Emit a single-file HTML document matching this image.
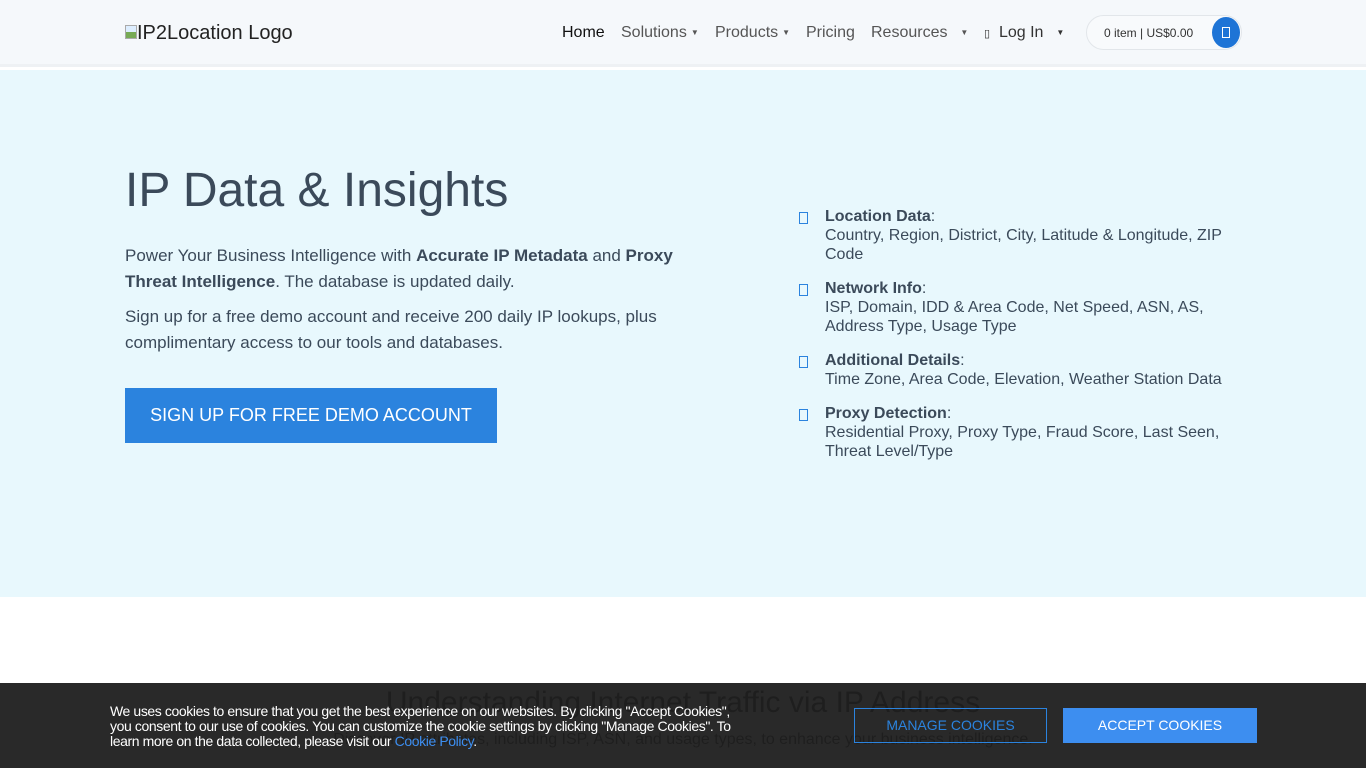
<!DOCTYPE html>
<html><head><meta charset="utf-8"><style>
*{margin:0;padding:0;box-sizing:border-box}
body{width:1366px;height:768px;overflow:hidden;font-family:"Liberation Sans",sans-serif;color:#3b4a5a;background:#fff;position:relative}
.hdr{height:67px;background:#f5f8fb;border-bottom:3px solid #eef1f4;position:relative}
.logo{position:absolute;left:125px;top:22px;font-size:20px;color:#222}
.logo i{display:inline-block;width:12px;height:14px;border:1px solid #aaa;background:linear-gradient(#def 50%,#7a5 50%);vertical-align:0}
.nav{position:absolute;top:24px;font-size:16px;color:#555}
.car{font-size:8px;vertical-align:2px;margin-left:4px}
.cart{position:absolute;left:1086px;top:15px;width:156px;height:35px;border:1px solid #e2e6ea;border-radius:18px;background:#f8fafc;font-size:12px;color:#333;padding:10px 0 0 17px}
.cart b{position:absolute;right:1px;top:1px;width:28px;height:31px;border-radius:50%;background:#1e74d6}
.cart b:after{content:"";position:absolute;left:10px;top:10px;width:6px;height:9px;border:1px solid #fff}
.hero{position:absolute;top:70px;left:0;width:1366px;height:527px;background:#e8f8fd}
h1{position:absolute;left:125px;top:163px;font-size:48px;font-weight:400;color:#3b4a5a}
.p{position:absolute;left:125px;font-size:17px;line-height:26px;width:580px}
.btn{position:absolute;left:125px;top:388px;width:372px;height:55px;background:#2b83de;color:#fff;font-size:18px;text-align:center;line-height:55px}
.f{position:absolute;left:825px;font-size:16px;line-height:19px;width:420px}
.f:before{content:"";position:absolute;left:-26px;top:5px;width:7px;height:10px;border:1px solid #2b83de}
.ck{position:absolute;left:0;top:683px;width:1366px;height:85px;background:rgba(30,30,30,.95);color:#fff}
.ck p{position:absolute;left:110px;top:21px;font-size:14px;line-height:15px;width:645px;letter-spacing:-.4px}
.ck a{color:#3d8ef0}
.m{position:absolute;left:854px;top:25px;width:193px;height:35px;border:1px solid #2b83de;color:#2b83de;font-size:14px;text-align:center;line-height:33px}
.a{position:absolute;left:1063px;top:25px;width:194px;height:35px;background:#3d8ef0;color:#fff;font-size:14px;text-align:center;line-height:35px}
.bg2{position:absolute;top:686px;left:0;width:1366px;text-align:center;font-size:30px;color:#333}
.bg3{position:absolute;top:731px;left:0;width:1366px;text-align:center;font-size:16px;color:#333}
</style></head><body>
<div class="hdr">
<div class="logo"><i></i>IP2Location Logo</div>
<span class="nav" style="left:562px;color:#111">Home</span>
<span class="nav" style="left:621px">Solutions<span class="car">▼</span></span>
<span class="nav" style="left:715px">Products<span class="car">▼</span></span>
<span class="nav" style="left:806px">Pricing</span>
<span class="nav" style="left:871px">Resources &nbsp;<span class="car">▼</span></span>
<span class="nav" style="left:984px;color:#333"><span style="font-size:11px">▯</span>&nbsp; Log In &nbsp;<span class="car">▼</span></span>
<div class="cart">0 item | US$0.00<b></b></div>
</div>
<div class="hero"></div>
<h1>IP Data &amp; Insights</h1>
<div class="p" style="top:243px">Power Your Business Intelligence with <b>Accurate IP Metadata</b> and <b>Proxy Threat Intelligence</b>. The database is updated daily.</div>
<div class="p" style="top:304px">Sign up for a free demo account and receive 200 daily IP lookups, plus complimentary access to our tools and databases.</div>
<div class="btn">SIGN UP FOR FREE DEMO ACCOUNT</div>
<div class="f" style="top:207px"><b>Location Data</b>:<br>Country, Region, District, City, Latitude &amp; Longitude, ZIP Code</div>
<div class="f" style="top:279px"><b>Network Info</b>:<br>ISP, Domain, IDD &amp; Area Code, Net Speed, ASN, AS, Address Type, Usage Type</div>
<div class="f" style="top:351px"><b>Additional Details</b>:<br>Time Zone, Area Code, Elevation, Weather Station Data</div>
<div class="f" style="top:404px"><b>Proxy Detection</b>:<br>Residential Proxy, Proxy Type, Fraud Score, Last Seen, Threat Level/Type</div>
<div class="bg2">Understanding Internet Traffic via IP Address</div>
<div class="bg3">Discover IP attributes, including ISP, ASN, and usage types, to enhance your business intelligence.</div>
<div class="ck">
<p>We uses cookies to ensure that you get the best experience on our websites. By clicking "Accept Cookies",<br>you consent to our use of cookies. You can customize the cookie settings by clicking "Manage Cookies". To learn more on the data collected, please visit our <a>Cookie Policy</a>.</p>
<div class="m">MANAGE COOKIES</div>
<div class="a">ACCEPT COOKIES</div>
</div>
</body></html>
